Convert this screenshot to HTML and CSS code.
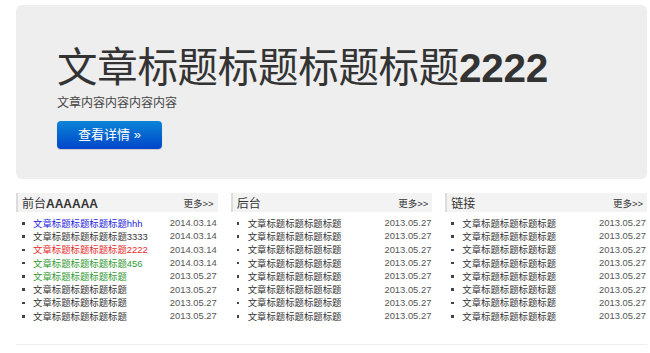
FILE: index.html
```html
<!DOCTYPE html>
<html lang="zh-CN">
<head>
    <meta charset="UTF-8">
    <title>首页</title>
    <link rel="stylesheet" href="styles.css">
</head>
<body>
    <div class="container">
        <div class="hero">
            <h1 class="heroTitle">文章标题标题标题标题<b>2222</b></h1>
            <p class="heroText">文章内容内容内容内容</p>
            <a class="btnPrimary" href="#">查看详情 &raquo;</a>
        </div>

        <div class="columns">
            <div class="col">
                <div class="colHead">
                    <span class="colTitle">前台<b>AAAAAA</b></span>
                    <a class="more" href="#">更多&gt;&gt;</a>
                </div>
                <ul class="news">
                    <li><a class="blue" href="#">文章标题标题标题标题hhh</a><span class="date">2014.03.14</span></li>
                    <li><a href="#">文章标题标题标题标题3333</a><span class="date">2014.03.14</span></li>
                    <li><a class="red" href="#">文章标题标题标题标题2222</a><span class="date">2014.03.14</span></li>
                    <li><a class="green" href="#">文章标题标题标题标题456</a><span class="date">2014.03.14</span></li>
                    <li><a class="green" href="#">文章标题标题标题标题</a><span class="date">2013.05.27</span></li>
                    <li><a href="#">文章标题标题标题标题</a><span class="date">2013.05.27</span></li>
                    <li><a href="#">文章标题标题标题标题</a><span class="date">2013.05.27</span></li>
                    <li><a href="#">文章标题标题标题标题</a><span class="date">2013.05.27</span></li>
                </ul>
            </div>
            <div class="col">
                <div class="colHead">
                    <span class="colTitle">后台</span>
                    <a class="more" href="#">更多&gt;&gt;</a>
                </div>
                <ul class="news">
                    <li><a href="#">文章标题标题标题标题</a><span class="date">2013.05.27</span></li>
                    <li><a href="#">文章标题标题标题标题</a><span class="date">2013.05.27</span></li>
                    <li><a href="#">文章标题标题标题标题</a><span class="date">2013.05.27</span></li>
                    <li><a href="#">文章标题标题标题标题</a><span class="date">2013.05.27</span></li>
                    <li><a href="#">文章标题标题标题标题</a><span class="date">2013.05.27</span></li>
                    <li><a href="#">文章标题标题标题标题</a><span class="date">2013.05.27</span></li>
                    <li><a href="#">文章标题标题标题标题</a><span class="date">2013.05.27</span></li>
                    <li><a href="#">文章标题标题标题标题</a><span class="date">2013.05.27</span></li>
                </ul>
            </div>
            <div class="col">
                <div class="colHead">
                    <span class="colTitle">链接</span>
                    <a class="more" href="#">更多&gt;&gt;</a>
                </div>
                <ul class="news">
                    <li><a href="#">文章标题标题标题标题</a><span class="date">2013.05.27</span></li>
                    <li><a href="#">文章标题标题标题标题</a><span class="date">2013.05.27</span></li>
                    <li><a href="#">文章标题标题标题标题</a><span class="date">2013.05.27</span></li>
                    <li><a href="#">文章标题标题标题标题</a><span class="date">2013.05.27</span></li>
                    <li><a href="#">文章标题标题标题标题</a><span class="date">2013.05.27</span></li>
                    <li><a href="#">文章标题标题标题标题</a><span class="date">2013.05.27</span></li>
                    <li><a href="#">文章标题标题标题标题</a><span class="date">2013.05.27</span></li>
                    <li><a href="#">文章标题标题标题标题</a><span class="date">2013.05.27</span></li>
                </ul>
            </div>
        </div>

        <div class="footer"></div>
    </div>
</body>
</html>
```

FILE: styles.css
```css
body {
    margin: 0;
    background: #fff;
    color: #333;
    font-family: "Liberation Sans", "Noto Sans CJK SC", sans-serif;
}
a {
    text-decoration: none;
}
.container {
    width: 631px;
    margin: 5px 0 0 16px;
}
.hero {
    background: #eeeeee;
    border-radius: 6px;
    height: 174px;
    box-sizing: border-box;
    padding: 42px 41px 0;
}
.heroTitle {
    margin: 0;
    font-size: 40.5px;
    line-height: 42px;
    font-weight: normal;
    color: #333;
    letter-spacing: -0.3px;
}
.heroTitle b {
    font-weight: bold;
}
.heroText {
    margin: 7px 0 0;
    font-size: 12px;
    line-height: 14px;
    color: #444;
}
.btnPrimary {
    display: inline-block;
    margin-top: 11px;
    width: 105px;
    height: 28px;
    line-height: 28px;
    text-align: center;
    font-size: 13px;
    color: #fff;
    border-radius: 4px;
    background: linear-gradient(#0b84d8, #0046c9);
    box-shadow: 0 1px 1px rgba(0, 0, 0, 0.15);
}
.columns {
    display: flex;
    gap: 13px;
    margin-top: 14px;
}
.col {
    flex: 1;
}
.colHead {
    display: flex;
    justify-content: space-between;
    align-items: center;
    height: 19px;
    background: #f3f3f3;
    border-left: 2px solid #dcdcdc;
    padding: 0 4px 0 4px;
}
.colTitle {
    font-size: 12px;
    color: #333;
}
.colTitle b {
    font-weight: bold;
}
.more {
    font-size: 9.5px;
    color: #333;
}
.news {
    list-style: none;
    margin: 4px 0 0;
    padding: 0;
}
.news li {
    display: flex;
    align-items: center;
    height: 13.3px;
    font-size: 9.4px;
    padding-left: 17px;
    position: relative;
}
.news li::before {
    content: "";
    position: absolute;
    left: 6px;
    top: 6px;
    width: 2.5px;
    height: 2.5px;
    background: #444;
}
.news li a {
    flex: 1;
    color: #333;
}
.news li a.blue { color: #2222dd; }
.news li a.red { color: #e52b2b; }
.news li a.green { color: #2f9a2f; }
.date {
    color: #555;
    padding-right: 1px;
}
.footer {
    margin-top: 22px;
    border-top: 1px solid #eee;
}
```
